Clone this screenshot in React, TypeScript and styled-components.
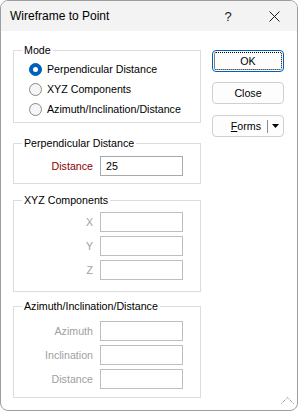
import React from "react";
import styled, { createGlobalStyle } from "styled-components";

const GlobalStyle = createGlobalStyle`
  html, body {
    margin: 0;
    padding: 0;
    background: #ffffff;
  }
  body {
    font-family: "Liberation Sans", Arial, sans-serif;
    font-size: 10.67px;
    color: #000;
  }
  * {
    box-sizing: border-box;
  }
`;

const App = () => {
  const [mode, setMode] = React.useState(0);
  const modes = ["Perpendicular Distance", "XYZ Components", "Azimuth/Inclination/Distance"];

  return (
    <>
      <GlobalStyle />
      <Window>
        <TitleBar>
          <Title>Wireframe to Point</Title>
          <TitleButton>?</TitleButton>
          <TitleButton>
            <svg width="11" height="11" viewBox="0 0 11 11">
              <path d="M0.5 0.5 L10.5 10.5 M10.5 0.5 L0.5 10.5" stroke="#1b1b1b" strokeWidth="1" />
            </svg>
          </TitleButton>
        </TitleBar>

        <Body>
          <LeftCol>
            <Group $top={0} $padTop={2} $padBottom={3}>
              <Legend>Mode</Legend>
              {modes.map((m, i) => (
                <RadioRow key={m} onClick={() => setMode(i)}>
                  <RadioDot $checked={mode === i} />
                  <span>{m}</span>
                </RadioRow>
              ))}
            </Group>

            <Group $top={13} $padTop={6} $padBottom={7}>
              <Legend>Perpendicular Distance</Legend>
              <FieldGrid>
                <FieldLabel $tone="red">Distance</FieldLabel>
                <Input defaultValue="25" />
              </FieldGrid>
            </Group>

            <Group $top={9} $padTop={5} $padBottom={11}>
              <Legend>XYZ Components</Legend>
              <FieldGrid>
                <FieldLabel $tone="off">X</FieldLabel>
                <Input disabled />
                <FieldLabel $tone="off">Y</FieldLabel>
                <Input disabled />
                <FieldLabel $tone="off">Z</FieldLabel>
                <Input disabled />
              </FieldGrid>
            </Group>

            <Group $top={7} $padTop={8} $padBottom={8}>
              <Legend>Azimuth/Inclination/Distance</Legend>
              <FieldGrid>
                <FieldLabel $tone="off">Azimuth</FieldLabel>
                <Input disabled />
                <FieldLabel $tone="off">Inclination</FieldLabel>
                <Input disabled />
                <FieldLabel $tone="off">Distance</FieldLabel>
                <Input disabled />
              </FieldGrid>
            </Group>
          </LeftCol>

          <RightCol>
            <Button $focused>OK</Button>
            <Button>Close</Button>
            <SplitButton>
              <SplitText>
                <u>F</u>orms
              </SplitText>
              <SplitDivider />
              <SplitArrow>
                <svg width="7" height="4" viewBox="0 0 7 4">
                  <path d="M0 0 L7 0 L3.5 4 Z" fill="#000" />
                </svg>
              </SplitArrow>
            </SplitButton>
          </RightCol>
        </Body>

        <Grip>
          <svg width="13" height="7" viewBox="0 0 13 7">
            <polyline points="0.5,6.5 6.5,0.5 12.5,6.5" fill="none" stroke="#6e6e6e" strokeWidth="1" strokeDasharray="1 1" />
          </svg>
        </Grip>
      </Window>
    </>
  );
};

export default App;

const Window = styled.div`
  position: relative;
  width: 298px;
  height: 411px;
  border: 1px solid #9d9d9d;
  border-radius: 8px;
  overflow: hidden;
  display: flex;
  flex-direction: column;
  background: #ffffff;
`;

const TitleBar = styled.div`
  height: 30px;
  flex: none;
  display: flex;
  align-items: center;
  padding-left: 9px;
  background: #f3f3f3;
`;

const Title = styled.div`
  flex: 1;
  font-size: 12px;
  color: #000;
  padding-bottom: 1px;
`;

const TitleButton = styled.div`
  width: 46px;
  height: 30px;
  display: flex;
  align-items: center;
  justify-content: center;
  font-size: 13px;
  color: #1b1b1b;
`;

const Body = styled.div`
  flex: 1;
  display: flex;
  padding: 12px 0 0 12px;
`;

const LeftCol = styled.div`
  width: 188px;
  display: flex;
  flex-direction: column;
`;

const Group = styled.fieldset<{ $top: number; $padTop: number; $padBottom: number }>`
  margin: ${(p) => p.$top}px 0 0 0;
  padding: ${(p) => p.$padTop}px 0 ${(p) => p.$padBottom}px 0;
  border: 1px solid #dcdcdc;
  min-width: 0;
`;

const Legend = styled.legend`
  margin-left: 8px;
  padding: 0 2px;
  line-height: 14px;
  color: #000;
`;

const RadioRow = styled.label`
  height: 20px;
  display: flex;
  align-items: center;
  gap: 5px;
  padding-left: 15px;
  cursor: default;
`;

const RadioDot = styled.span<{ $checked?: boolean }>`
  width: 13px;
  height: 13px;
  flex: none;
  border-radius: 50%;
  border: 1px solid ${(p) => (p.$checked ? "#005fb8" : "#8a8a8a")};
  background: ${(p) => (p.$checked ? "#005fb8" : "#f5f5f5")};
  display: flex;
  align-items: center;
  justify-content: center;

  &::after {
    content: "";
    width: 5px;
    height: 5px;
    border-radius: 50%;
    background: #ffffff;
    display: ${(p) => (p.$checked ? "block" : "none")};
  }
`;

const FieldGrid = styled.div`
  display: grid;
  grid-template-columns: 79px 83px;
  column-gap: 7px;
  row-gap: 4px;
  align-items: center;
`;

const FieldLabel = styled.div<{ $tone?: "red" | "off" }>`
  text-align: right;
  color: ${(p) => (p.$tone === "red" ? "#8b0000" : p.$tone === "off" ? "#a0a0a0" : "#000")};
`;

const Input = styled.input`
  width: 83px;
  height: 20px;
  margin: 0;
  padding: 0 5px;
  border: 1px solid #a9a9a9;
  border-radius: 0;
  background: #ffffff;
  font-family: inherit;
  font-size: 10.67px;
  color: #000;
  outline: none;

  &:disabled {
    border-color: #bdbdbd;
  }
`;

const RightCol = styled.div`
  width: 72px;
  margin-left: 11px;
  padding-top: 7px;
  display: flex;
  flex-direction: column;
  gap: 10px;
`;

const Button = styled.div<{ $focused?: boolean }>`
  position: relative;
  height: 22px;
  display: flex;
  align-items: center;
  justify-content: center;
  border: 1px solid ${(p) => (p.$focused ? "#005fb8" : "#d0d0d0")};
  border-radius: 4px;
  background: #fdfdfd;
  color: #000;

  &::after {
    content: "";
    display: ${(p) => (p.$focused ? "block" : "none")};
    position: absolute;
    inset: 1px;
    border: 1px dotted #000;
    border-radius: 2px;
  }
`;

const SplitButton = styled.div`
  height: 22px;
  margin-top: 1px;
  display: flex;
  align-items: center;
  border: 1px solid #d0d0d0;
  border-radius: 4px;
  background: #fdfdfd;
`;

const SplitText = styled.div`
  flex: 1;
  text-align: right;
  padding-right: 6px;

  u {
    text-decoration-thickness: 1px;
    text-underline-offset: 1px;
  }
`;

const SplitDivider = styled.div`
  width: 1px;
  height: 13px;
  background: #8c8c8c;
`;

const SplitArrow = styled.div`
  width: 15px;
  display: flex;
  align-items: center;
  justify-content: center;
`;

const Grip = styled.div`
  position: absolute;
  right: 3px;
  bottom: 6px;
  width: 13px;
  height: 7px;
  display: flex;

  svg {
    display: block;
  }
`;
